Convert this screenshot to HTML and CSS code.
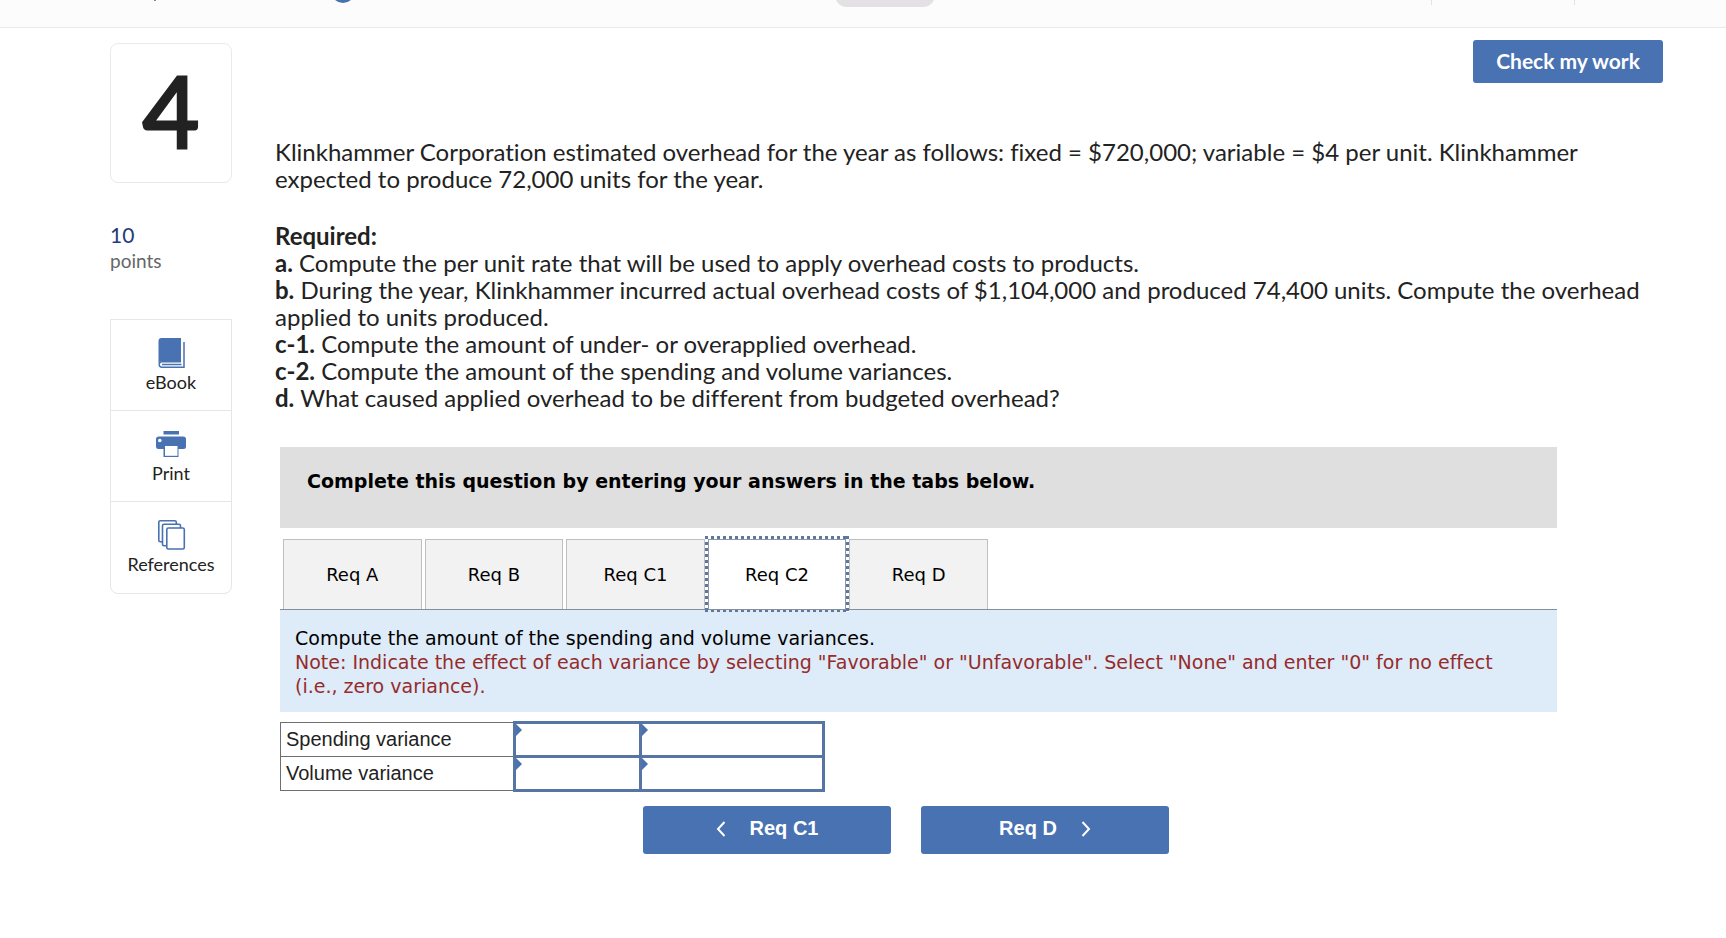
FILE: index.html
```html
<!DOCTYPE html>
<html lang="en">
  <head>
    <meta charset="UTF-8">
    <meta name="viewport" content="width=device-width, initial-scale=1">
    <title>Question 4</title>
    <link rel="stylesheet" href="styles.css">
  </head>
  <body>
    <header class="top_bar">
      <div class="top_left"><span class="top_mark"></span><span class="top_badge"></span></div>
      <span class="top_handle"></span>
      <div class="top_right"><span class="top_line"></span><span class="top_line"></span></div>
    </header>
    <div class="page">
      <aside class="side">
        <div class="q_num">4</div>
        <div class="points">
          <p class="points_val">10</p>
          <p class="points_txt">points</p>
        </div>
        <div class="tools">
          <button type="button" class="tool">
            <svg class="tool_icon" width="30" height="30" viewBox="0 0 30 30">
              <path d="M5.500 0H25V23H6.500Q4 23 2.500 25V3Q2.500 0 5.500 0Z" fill="#4872b2"/>
              <path d="M28 4V29.200H6Q3.200 29.200 3.200 26.500T6 23.800H25M6 26.500H25.500" fill="none" stroke="#4872b2" stroke-width="1.500"/>
            </svg>
            eBook
          </button>
          <button type="button" class="tool">
            <svg class="tool_icon" width="30" height="30" viewBox="0 0 30 30">
              <path d="M7.500 2H23V5.500H7.500ZM3 7.500H27Q30 7.500 30 10V17.500Q30 20 27.500 20H22.500V28H7.500V20H2.500Q0 20 0 17.500V10Q0 7.500 3 7.500Z" fill="#4872b2"/>
              <circle cx="3.800" cy="11.500" r="1.800" fill="#fff"/>
              <path d="M9 17H21.500V26.800H9Z" fill="#fff"/>
            </svg>
            Print
          </button>
          <button type="button" class="tool">
            <svg class="tool_icon" width="30" height="30" viewBox="0 0 30 30" fill="#fff" stroke="#4872b2" stroke-width="1.600">
              <rect x="2.800" y=".8" width="17.500" height="21" rx="1.500"/>
              <rect x="6.500" y="4.300" width="18" height="21.500" rx="1.500"/>
              <rect x="10.800" y="8" width="17.500" height="21" rx="1.500"/>
            </svg>
            References
          </button>
        </div>
      </aside>
      <main class="cont">
        <div class="check_row"><button type="button" class="btn btn_check">Check my work</button></div>
        <div class="question">
          <p>Klinkhammer Corporation estimated overhead for the year as follows: fixed = $720,000; variable = $4 per unit. Klinkhammer expected to produce 72,000 units for the year.</p>
          <p>
            <b>Required:</b><br>
            <b>a.</b> Compute the per unit rate that will be used to apply overhead costs to products.<br>
            <b>b.</b> During the year, Klinkhammer incurred actual overhead costs of $1,104,000 and produced 74,400 units. Compute the overhead applied to units produced.<br>
            <b>c-1.</b> Compute the amount of under- or overapplied overhead.<br>
            <b>c-2.</b> Compute the amount of the spending and volume variances.<br>
            <b>d.</b> What caused applied overhead to be different from budgeted overhead?
          </p>
        </div>
        <section class="answer">
          <h2 class="answer_tit">Complete this question by entering your answers in the tabs below.</h2>
          <div class="tab_wrap">
            <div class="tabs" role="tablist">
              <button type="button" class="tab" role="tab">Req A</button>
              <button type="button" class="tab" role="tab">Req B</button>
              <button type="button" class="tab" role="tab">Req C1</button>
              <button type="button" class="tab on" role="tab" aria-selected="true">Req C2</button>
              <button type="button" class="tab" role="tab">Req D</button>
            </div>
          </div>
          <div class="guide">
            <p>Compute the amount of the spending and volume variances.</p>
            <p class="note">Note: Indicate the effect of each variance by selecting "Favorable" or "Unfavorable". Select "None" and enter "0" for no effect (i.e., zero variance).</p>
          </div>
          <table class="sheet">
            <tr>
              <th scope="row"><label for="spending">Spending variance</label></th>
              <td class="amount"><input type="text" id="spending"></td>
              <td class="effect"><select aria-label="Spending variance effect"><option></option><option>Favorable</option><option>Unfavorable</option><option>None</option></select></td>
            </tr>
            <tr>
              <th scope="row"><label for="volume">Volume variance</label></th>
              <td class="amount"><input type="text" id="volume"></td>
              <td class="effect"><select aria-label="Volume variance effect"><option></option><option>Favorable</option><option>Unfavorable</option><option>None</option></select></td>
            </tr>
          </table>
          <div class="move">
            <button type="button" class="btn btn_move">
              <svg width="10" height="16" viewBox="0 0 10 16"><path d="M8.500 1L2 8L8.500 15" fill="none" stroke="#fff" stroke-width="2"/></svg>
              Req C1
            </button>
            <button type="button" class="btn btn_move">
              Req D
              <svg width="10" height="16" viewBox="0 0 10 16"><path d="M1.500 1L8 8L1.500 15" fill="none" stroke="#fff" stroke-width="2"/></svg>
            </button>
          </div>
        </section>
      </main>
    </div>
  </body>
</html>
```
FILE: styles.css
```css
* {padding: 0; margin: 0; box-sizing: border-box;}
body {background: #fff; color: #222; font-family: Lato, "Open Sans", sans-serif; font-size: 24px; line-height: 27px; font-variant-ligatures: none;}
button {font-family: inherit; cursor: pointer;}

/* header */
.top_bar {display: flex; justify-content: space-between; height: 28px; background: #fcfcfc; border-bottom: 1px solid #e9e9e9; overflow: hidden;}
.top_left {flex: 1; display: flex; padding-left: 154px;}
.top_mark {width: 2px; height: 1px; background: #888;}
.top_badge {width: 24px; height: 24px; margin: -21px 0 0 175px; border-radius: 50%; background: #4872b2;}
.top_handle {width: 100px; height: 24px; margin: -17px 0 0 40px; border-radius: 12px; background: #e3e1e4;}
.top_right {flex: 1; display: flex; justify-content: flex-end; gap: 142px; padding-right: 151px;}
.top_line {width: 1px; height: 5px; background: #e3e3e3;}

.page {display: flex; gap: 43px; padding: 12px 63px 40px 110px;}

/* side */
.side {flex: none; width: 122px; padding-top: 3px;}
.q_num {height: 140px; border: 1px solid #eaeaea; border-radius: 8px; text-align: center; font-size: 98px; line-height: 132px; -webkit-text-stroke: 3px #222;}
.points {padding: 39px 0 45px;}
.points_val {color: #1f3c78; font-size: 21px; line-height: 26px;}
.points_txt {color: #666; font-size: 19px; line-height: 26px;}
.tools {border: 1px solid #e6e6e6; border-radius: 0 0 8px 8px;}
.tool {display: flex; flex-direction: column; align-items: center; gap: 4px; width: 100%; height: 91px; padding-top: 18px; border: 0; border-bottom: 1px solid #e6e6e6; background: none; color: #222; font-size: 18px; line-height: 20px;}
.tool:last-child {border-bottom: 0;}
.tool_icon {display: block;}

/* content */
.cont {flex: 1; min-width: 0;}
.btn {padding-bottom: 3px; border: 0; border-radius: 3px; background: #4872b2; color: #fff; font-weight: bold; font-size: 20px;}
.check_row {display: flex; justify-content: flex-end;}
.btn_check {width: 190px; height: 43px; font-size: 21px;}
.question {padding-top: 55px;}
.question p {margin-bottom: 30px;}

.answer {margin: 36px 106px 0 5px; font-family: "DejaVu Sans", Verdana, sans-serif; font-size: 19px; line-height: 24px; color: #000;}
.answer_tit {height: 81px; padding: 22px 27px; background: #dfdfdf; font-size: 19px; line-height: 24px;}
.tab_wrap {padding: 11px 3px 0; border-bottom: 1px solid #878d99;}
.tabs {display: flex; gap: 3px; width: 705px;}
.tab {position: relative; flex: 1; height: 70px; border: 1px solid #bfbfbf; border-bottom: 0; background: #f2f2f2; color: #000; font-size: 18px;}
.tab.on {border-color: #8f98a8; background: #fff;}
/* dotted focus ring */
.tab.on::after {content: ""; position: absolute; top: -4px; right: -4px; bottom: -3px; left: -4px;
  background:
    repeating-linear-gradient(90deg, #5f769f 0 3px, transparent 3px 6px) top / 100% 3px no-repeat,
    repeating-linear-gradient(90deg, #5f769f 0 3px, transparent 3px 6px) bottom / 100% 2px no-repeat,
    repeating-linear-gradient(#5f769f 0 3px, #fff 3px 6px) left / 3px 100% no-repeat,
    repeating-linear-gradient(#5f769f 0 3px, #fff 3px 6px) right / 3px 100% no-repeat;}
.guide {padding: 16px 40px 14px 15px; background: #deebf8;}
.note {color: #962b2b;}

.sheet {margin-top: 9px; border-collapse: collapse; font-family: "Liberation Sans", Arial, sans-serif; font-size: 20px; color: #222;}
.sheet th {width: 234px; height: 34px; padding: 0 5px 2px; border: 1px solid #6f6f6f; font-weight: normal; text-align: left;}
.sheet td {position: relative; height: 34px; border: 3px solid #5674a4;}
.sheet td::before {content: ""; position: absolute; top: 0; left: 0; border: 6px solid transparent; border-left-color: #4872b2; border-right: 0;}
.sheet .amount {width: 126px;}
.sheet .effect {width: 183px;}
.sheet input, .sheet select {display: block; width: 100%; height: 31px; padding: 0 8px; border: 0; background: none; appearance: none; font: inherit;}

.move {display: flex; justify-content: center; gap: 30px; margin-top: 14px; padding-right: 25px;}
.btn_move {display: flex; align-items: center; justify-content: center; gap: 24px; width: 248px; height: 48px; font-family: "Liberation Sans", Arial, sans-serif;}
```
